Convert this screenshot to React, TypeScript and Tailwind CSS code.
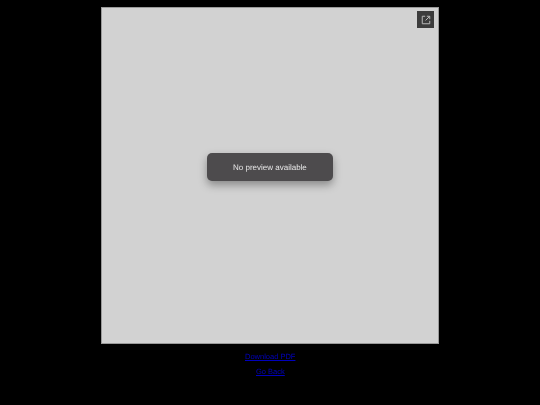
function OpenButton() {
  return (
    <button className="absolute right-[4px] top-[3px] flex h-[17px] w-[17px] items-center justify-center bg-[#3c3c3c] text-[#b8b8b8]">
      <svg width="10" height="10" viewBox="0 0 24 24" fill="none" stroke="currentColor" strokeWidth="2.4">
        <path d="M10 3H3v18h18v-7" />
        <path d="M14 3h7v7" />
        <path d="M21 3 11 13" />
      </svg>
    </button>
  );
}

export default function App() {
  return (
    <div className="flex h-[405px] w-[540px] flex-col items-center overflow-hidden bg-black pt-[7px] font-['Liberation_Sans',Arial,sans-serif] [text-rendering:geometricPrecision]">
      <div className="relative flex h-[337px] w-[338px] items-center justify-center border border-[#9a9a9a] bg-[#d2d2d2]">
        <OpenButton />
        <div className="mb-[17px] flex h-[28px] w-[126px] items-center justify-center rounded-[5px] bg-[#4d4b4d] pt-[1px] text-[#f0f0f0] shadow-[0_4px_8px_rgba(0,0,0,0.35)]">
          <span className="text-[8px] opacity-95 will-change-transform">No preview available</span>
        </div>
      </div>
      <a href="#" className="mt-[8px] text-[7.5px] leading-[10px] text-[#0000c8] underline opacity-95 will-change-transform">
        Download PDF
      </a>
      <a href="#" className="mt-[5px] text-[7.5px] leading-[10px] text-[#0000c8] underline opacity-95 will-change-transform">
        Go Back
      </a>
    </div>
  );
}
